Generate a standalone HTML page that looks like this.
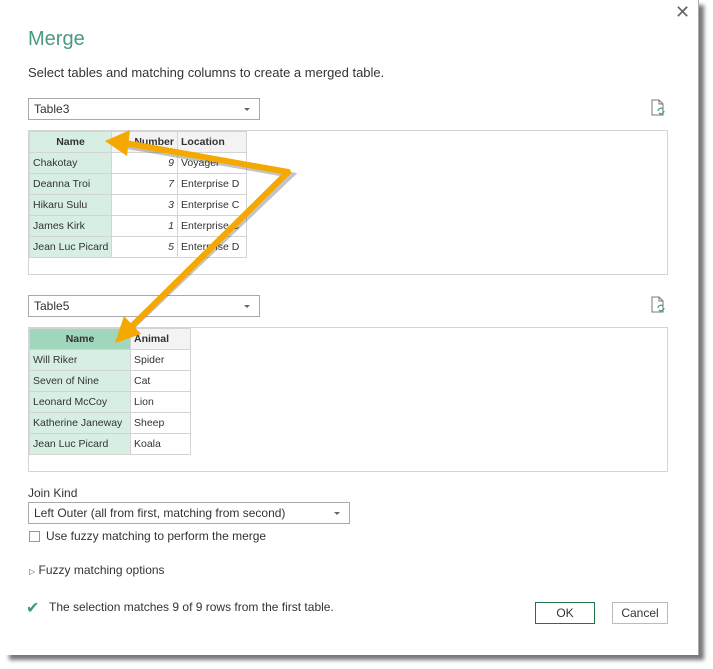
<!DOCTYPE html>
<html><head><style>
*{margin:0;padding:0;box-sizing:border-box}
body{width:713px;height:669px;background:#fff;font-family:"Liberation Sans",sans-serif;position:relative;overflow:hidden;color:#333}
.dlg{position:absolute;left:4px;top:0;width:695px;height:655px;background:#fff;box-shadow:5px 5px 4px #777;border-right:1px solid #aaa}
.a{position:absolute}
.dd{position:absolute;border:1px solid #a9a9a9;height:22px;font-size:12px;padding:3px 0 0 5px;color:#333}
.dd:after{content:"";position:absolute;right:9px;top:9px;border-left:3px solid transparent;border-right:3px solid transparent;border-top:3px solid #666}
.box{position:absolute;border:1px solid #d4d4d4}
table{border-collapse:collapse;font-size:10.5px;position:absolute;left:0;top:0;table-layout:fixed}
td,th{border:1px solid #d4d4d4;height:21px;padding:0 3px;white-space:nowrap;overflow:hidden;color:#333}
th{background:#f3f3f3;text-align:left;font-weight:bold}
th.n{text-align:center;background:#d6efe2}
th.s{background:#a0d6bc}
td.n{background:#d6efe2}
td.r{text-align:right;font-style:italic}
.btn{position:absolute;height:22px;border:1px solid #bbb;font-size:12px;text-align:center;line-height:20px}
</style></head><body>
<div class="dlg"></div>
<div class="a" style="left:675px;top:2px;font-size:18px;color:#666">✕</div>
<div class="a" style="left:28px;top:28px;font-size:20px;color:#4a9a83;font-weight:normal">Merge</div>
<div class="a" style="left:28px;top:65px;font-size:13px">Select tables and matching columns to create a merged table.</div>
<div class="dd" style="left:28px;top:98px;width:232px">Table3</div>
<svg class="a" style="left:650px;top:99px" width="16" height="18"><path d="M2 1H9L13 5V16H2Z M9 1V5H13" fill="none" stroke="#777"/><path d="M8 12a3 3 0 0 1 5-2M14 12a3 3 0 0 1-5 2" stroke="#4aa07c" fill="none" stroke-width="1.3"/></svg>
<div class="box" style="left:28px;top:130px;width:640px;height:145px">
<table style="width:217px"><colgroup><col style="width:82px"><col style="width:66px"><col style="width:69px"></colgroup>
<tr><th class="n">Name</th><th style="text-align:right">Number</th><th>Location</th></tr>
<tr><td class="n">Chakotay</td><td class="r">9</td><td>Voyager</td></tr>
<tr><td class="n">Deanna Troi</td><td class="r">7</td><td>Enterprise D</td></tr>
<tr><td class="n">Hikaru Sulu</td><td class="r">3</td><td>Enterprise C</td></tr>
<tr><td class="n">James Kirk</td><td class="r">1</td><td>Enterprise C</td></tr>
<tr><td class="n">Jean Luc Picard</td><td class="r">5</td><td>Enterprise D</td></tr></table></div>
<div class="dd" style="left:28px;top:295px;width:232px">Table5</div>
<svg class="a" style="left:650px;top:296px" width="16" height="18"><path d="M2 1H9L13 5V16H2Z M9 1V5H13" fill="none" stroke="#777"/><path d="M8 12a3 3 0 0 1 5-2M14 12a3 3 0 0 1-5 2" stroke="#4aa07c" fill="none" stroke-width="1.3"/></svg>
<div class="box" style="left:28px;top:327px;width:640px;height:145px">
<table style="width:161px"><colgroup><col style="width:101px"><col style="width:60px"></colgroup>
<tr><th class="n s">Name</th><th>Animal</th></tr>
<tr><td class="n">Will Riker</td><td>Spider</td></tr>
<tr><td class="n">Seven of Nine</td><td>Cat</td></tr>
<tr><td class="n">Leonard McCoy</td><td>Lion</td></tr>
<tr><td class="n">Katherine Janeway</td><td>Sheep</td></tr>
<tr><td class="n">Jean Luc Picard</td><td>Koala</td></tr></table></div>
<svg class="a" style="left:0;top:0" width="713" height="669">
<g fill="none" stroke="#555" stroke-opacity=".35" stroke-width="6" transform="translate(3,3)"><polyline points="125,143 288,172 128,325"/></g>
<g fill="#f5a800"><polygon points="105,141 130,130 127,156"/><polygon points="115,343 124,316 141,334"/></g>
<polyline points="125,143 288,172 130,328" fill="none" stroke="#f5a800" stroke-width="6" stroke-linejoin="round"/>
</svg>
<div class="a" style="left:28px;top:486px;font-size:12px">Join Kind</div>
<div class="dd" style="left:28px;top:502px;width:322px">Left Outer (all from first, matching from second)</div>
<div class="a" style="left:29px;top:531px;width:11px;height:11px;border:1px solid #999"></div>
<div class="a" style="left:46px;top:529px;font-size:12px">Use fuzzy matching to perform the merge</div>
<div class="a" style="left:29px;top:563px;font-size:12px"><span style="font-size:8px;color:#555">▷</span> Fuzzy matching options</div>
<div class="a" style="left:26px;top:598px;font-size:16px;color:#3d9a72">✔</div>
<div class="a" style="left:49px;top:600px;font-size:12px">The selection matches 9 of 9 rows from the first table.</div>
<div class="btn" style="left:535px;top:602px;width:60px;border-color:#217346">OK</div>
<div class="btn" style="left:612px;top:602px;width:56px">Cancel</div>
</body></html>
